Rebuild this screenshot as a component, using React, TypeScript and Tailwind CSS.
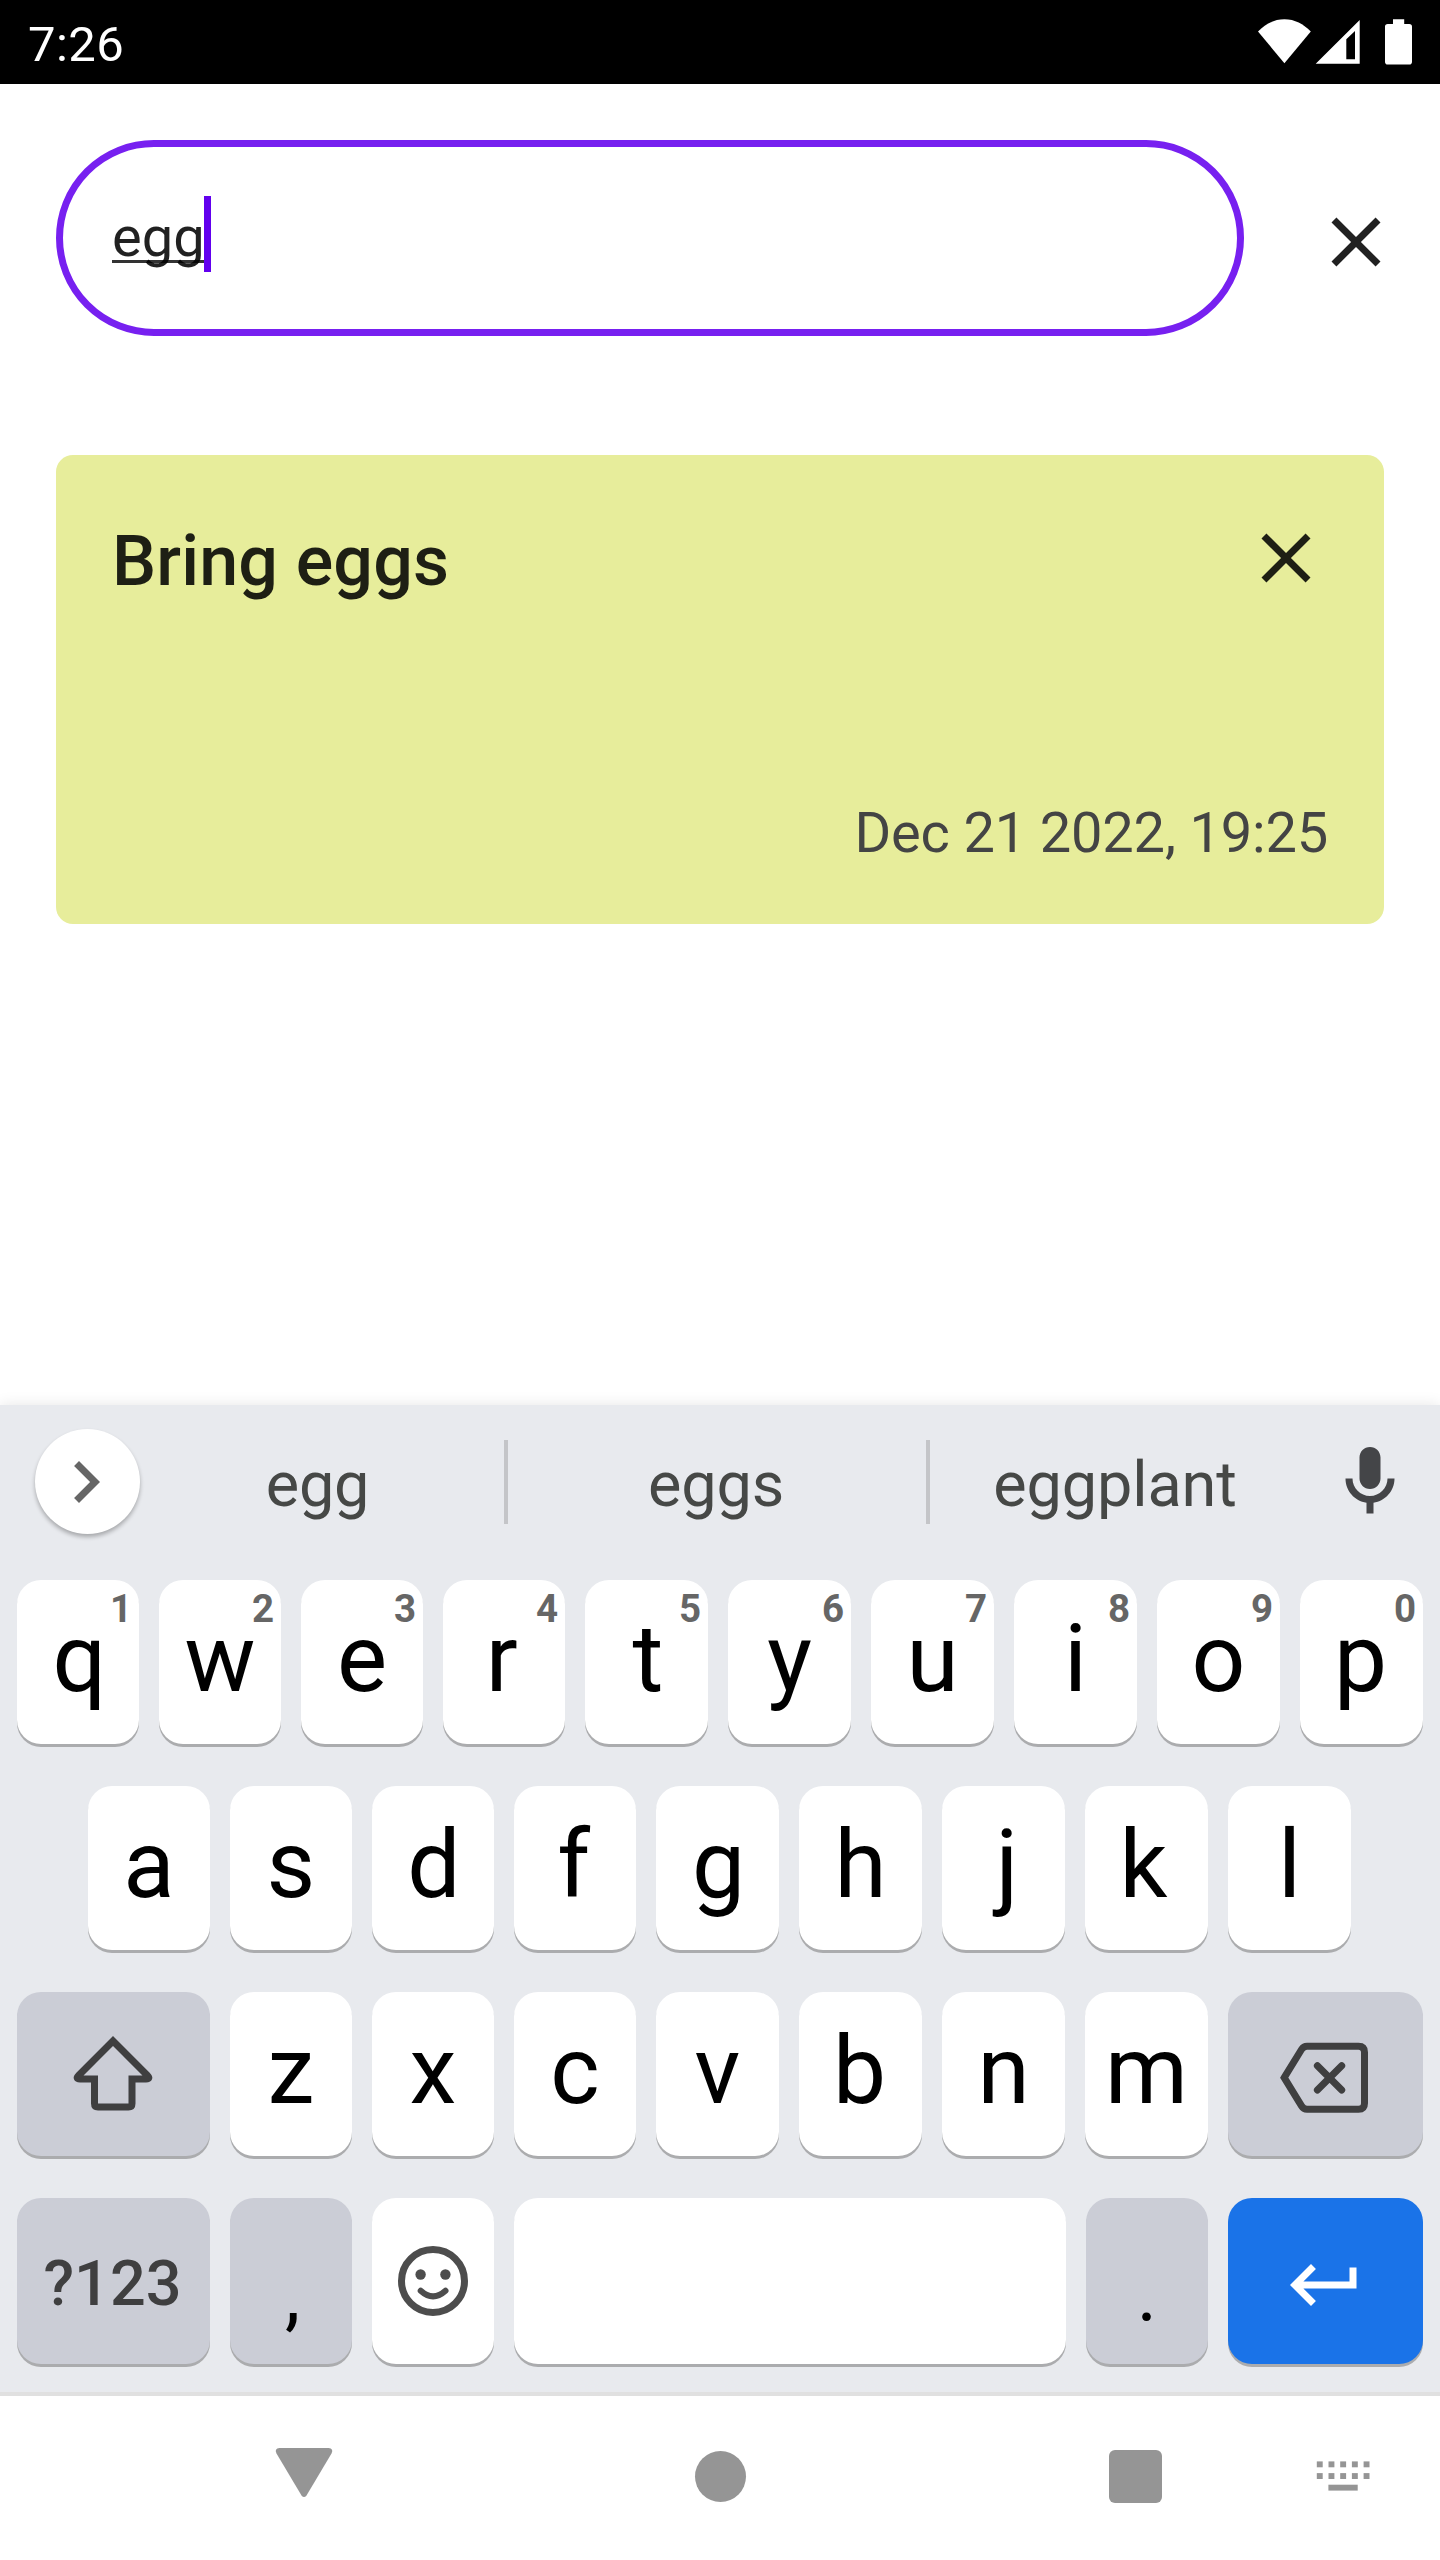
import React from "react";

type KeyDef = { label: string; w: number; hint?: string };

const row = (letters: string, firstWide: number, hints?: string): KeyDef[] =>
  letters.split("").map((label, i) => ({
    label,
    w: i < firstWide ? 122 : 123,
    hint: hints?.[i],
  }));

const ROW_ONE = row("qwertyuiop", 4, "1234567890");
const ROW_TWO = row("asdfghjkl", 4);
const ROW_THREE = row("zxcvbnm", 3);

// Side-bearing compensation, so each glyph is centred by its ink on the key cap.
const NUDGE: Record<string, number> = {
  q: 2.6,
  r: -4.4,
  t: 3,
  p: -2,
  d: 2,
  f: -2.6,
  g: 2,
  j: 7,
  k: -6,
  b: -2,
};

const KEY = "relative shrink-0 rounded-[24px] shadow-[0_3px_0_#abacae] flex justify-center";

function LetterKey({ label, w, hint }: KeyDef) {
  return (
    <button className={`${KEY} h-[164px] bg-white`} style={{ width: w }}>
      <span
        className="block h-[157px] text-[94.5px] leading-[157px] text-black"
        style={{ marginLeft: NUDGE[label] ?? 0 }}
      >
        {label}
      </span>
      {hint && (
        <span className="absolute right-[7px] top-0 text-[38.5px] font-bold leading-[57px] text-[#666666]">
          {hint}
        </span>
      )}
    </button>
  );
}

function CloseIcon({ className }: { className: string }) {
  return (
    <svg viewBox="0 0 24 24" className={`size-[84px] ${className}`} fill="currentColor">
      <path d="M19 6.41 17.59 5 12 10.59 6.41 5 5 6.41 10.59 12 5 17.59 6.41 19 12 13.41 17.59 19 19 17.59 13.41 12z" />
    </svg>
  );
}

function StatusBar() {
  return (
    <header className="flex h-[84px] shrink-0 justify-between bg-black pl-7 text-white">
      <span className="text-[49px] leading-[90px] tracking-[0.4px]">7:26</span>
      <svg viewBox="1250 0 190 84" className="h-[84px] w-[190px]" fill="currentColor">
        <path d="M1258 31.5C1265.5 24 1274 19.3 1284.4 19.3s18.900 4.700 26.400 12.200L1284.400 63.300z" />
        <path
          fillRule="evenodd"
          d="M1359.700 20V63.700H1315.700zM1355 31L1346.300 39.300V59.300H1355z"
        />
        <path d="M1393 19.300h11.200V24h5a2.800 2.800 0 0 1 2.800 2.800v35a2.800 2.800 0 0 1-2.800 2.800h-21.400a2.800 2.800 0 0 1-2.800-2.800v-35a2.800 2.800 0 0 1 2.800-2.800h5.200z" />
      </svg>
    </header>
  );
}

function SearchBar() {
  return (
    <div className="flex items-center pl-14 pt-14">
      <div className="flex h-[196px] w-[1188px] items-start rounded-full border-[7px] border-[#7720f0] pl-[49px]">
        <span className="relative text-[56px] leading-[180px] text-black/87">
          egg
          <span className="absolute left-0 top-[113px] h-[3px] w-[92px] bg-black/80" />
        </span>
        <span className="-ml-px mt-[49px] h-[76px] w-[7px] bg-[#6200ee]" />
      </div>
      <CloseIcon className="ml-[70px] mt-[8px] text-[#212121]" />
    </div>
  );
}

function NoteCard() {
  return (
    <article className="mx-14 mt-[119px] flex h-[469px] flex-col justify-between rounded-[17px] bg-[#e7ed9b] px-14">
      <div className="flex justify-between pt-14">
        <h1 className="text-[70px] font-medium leading-[100px] tracking-[0.15px] text-[#1e1f14]">
          Bring eggs
        </h1>
        <CloseIcon className="mt-[5px] text-[#1e1f14]" />
      </div>
      <time className="self-end pb-[49px] text-[56px] leading-[84px] tracking-[-0.18px] text-[#444444]">
        Dec 21 2022, 19:25
      </time>
    </article>
  );
}

function Suggestions() {
  return (
    <div className="flex h-[175px] text-center text-[63px] leading-[159px] tracking-[-0.15px] text-[#464846]">
      <button className="ml-[35px] mt-[24px] size-[105px] rounded-full bg-white shadow-[0_3px_4px_rgba(0,0,0,0.28)]">
        <svg viewBox="0 0 24 24" className="ml-[9px] size-[84px]" fill="#666666">
          <path d="M10 6 8.590 7.410 13.170 12l-4.580 4.590L10 18l6-6z" />
        </svg>
      </button>
      <span className="ml-[-10px] w-[374px] pl-px">egg</span>
      <span className="mt-[35px] h-[84px] w-[4px] bg-[#c4c5c8]" />
      <span className="w-[418px] pr-[2px]">eggs</span>
      <span className="mt-[35px] h-[84px] w-[4px] bg-[#c4c5c8]" />
      <span className="w-[370px]">eggplant</span>
      <svg viewBox="0 0 24 24" className="ml-[28px] mt-[35px] size-[84px]" fill="#444548">
        <path d="M12 14c1.660 0 3-1.340 3-3V5c0-1.660-1.340-3-3-3S9 3.340 9 5v6c0 1.660 1.340 3 3 3zm5-3c0 2.760-2.240 5-5 5s-5-2.240-5-5H5c0 3.530 2.610 6.430 6 6.920V21h2v-3.080c3.390-.49 6-3.390 6-6.920h-2z" />
      </svg>
    </div>
  );
}

function Keyboard() {
  return (
    <section className="flex h-[991px] shrink-0 flex-col border-b-[4px] border-[#e0e0e0] bg-[#e8eaee] shadow-[0_0_14px_rgba(0,0,0,0.1)]">
      <Suggestions />
      <div className="flex gap-5 pl-[17px]">
        {ROW_ONE.map((k) => (
          <LetterKey key={k.label} {...k} />
        ))}
      </div>
      <div className="mt-[42px] flex gap-5 pl-[88px]">
        {ROW_TWO.map((k) => (
          <LetterKey key={k.label} {...k} />
        ))}
      </div>
      <div className="mt-[42px] flex gap-5 pl-[17px]">
        <button className={`${KEY} h-[164px] w-[193px] bg-[#cbcdd6]`}>
          <svg
            viewBox="17 1992 193 164"
            className="h-[164px] w-[193px]"
            fill="none"
            stroke="#3f3f40"
            strokeWidth="7"
          >
            <path d="M113 2041L78.800 2075.200Q75 2079 80 2079H94.500V2103.500Q94.500 2107 98 2107H128.500Q132 2107 132 2103.500V2079H146Q151 2079 147.200 2075.200Z" />
          </svg>
        </button>
        {ROW_THREE.map((k) => (
          <LetterKey key={k.label} {...k} />
        ))}
        <button className={`${KEY} h-[164px] w-[195px] bg-[#cbcdd6]`}>
          <svg
            viewBox="1228 1992 195 164"
            className="h-[164px] w-[195px]"
            fill="none"
            stroke="#3f3f40"
            strokeWidth="7"
          >
            <path d="M1284.200 2077.700L1301.500 2049.500Q1303.500 2046.200 1307 2046.200H1358.500Q1364.500 2046.200 1364.500 2052.200V2103.200Q1364.500 2109.200 1358.500 2109.200H1307Q1303.500 2109.200 1301.500 2105.900Z" />
            <path strokeLinecap="round" d="M1317.400 2065.700l24.300 24.300M1341.700 2065.700l-24.300 24.300" />
          </svg>
        </button>
      </div>
      <div className="mt-[42px] flex gap-5 pl-[17px]">
        <button className={`${KEY} h-[166px] w-[193px] bg-[#cbcdd6]`}>
          <span className="mr-[2px] h-[166px] text-[63px] font-medium leading-[171px] text-[#3f3f40]">
            ?123
          </span>
        </button>
        <button className={`${KEY} h-[166px] w-[122px] bg-[#cbcdd6]`}>
          <span className="ml-[3px] h-[166px] text-[77px] leading-[195px] text-black">,</span>
        </button>
        <button className={`${KEY} h-[166px] w-[122px] bg-white`}>
          <svg viewBox="372 2198 122 166" className="h-[166px] w-[122px]" fill="none" stroke="#4d4d4d">
            <circle cx="433" cy="2281" r="31.500" strokeWidth="7" />
            <circle cx="420.600" cy="2274.500" r="5.200" fill="#4d4d4d" stroke="none" />
            <circle cx="445.400" cy="2274.500" r="5.200" fill="#4d4d4d" stroke="none" />
            <path d="M420.700 2290.800Q433 2302 445.500 2290.800" strokeWidth="6" strokeLinecap="round" />
          </svg>
        </button>
        <button className={`${KEY} h-[166px] w-[552px] bg-white`} />
        <button className={`${KEY} h-[166px] w-[122px] bg-[#cbcdd6]`}>
          <span className="h-[166px] text-[77px] leading-[195px] text-black">.</span>
        </button>
        <button className={`${KEY} h-[166px] w-[195px] bg-[#1a73e8]`}>
          <svg viewBox="0 0 24 24" className="mr-px mt-[45px] size-[84px]" fill="#ffffff">
            <path d="M19 7v4H5.830l3.580-3.590L8 6l-6 6 6 6 1.410-1.410L5.830 13H21V7z" />
          </svg>
        </button>
      </div>
    </section>
  );
}

function NavBar() {
  return (
    <nav className="flex h-[164px] shrink-0 bg-white text-[#959595]">
      <svg viewBox="0 0 62 56" className="ml-[273px] mt-[50px] h-[56px] w-[62px]" fill="currentColor">
        <path d="M6.500 2H55.500Q61 2.500 58.500 7.500L33.500 49.500Q31 52.500 28.500 49.500L3.500 7.500Q1 2.500 6.500 2z" />
      </svg>
      <span className="ml-[359.5px] mt-[54.5px] size-[51px] rounded-full bg-current" />
      <span className="ml-[363px] mt-[53.5px] size-[53px] rounded-[6px] bg-current" />
      <svg viewBox="1316 2460 55 32" className="ml-[154.5px] mt-[64px] h-[32px] w-[55px]" fill="currentColor">
        {[0, 1, 2, 3, 4].map((i) => (
          <g key={i}>
            <rect x={1316.8 + i * 11.7} y="2461.400" width="5.900" height="5.900" />
            <rect x={1316.8 + i * 11.7} y="2473.100" width="5.900" height="5.900" />
          </g>
        ))}
        <rect x="1328.400" y="2484.700" width="29.300" height="5.900" />
      </svg>
    </nav>
  );
}

export default function App() {
  return (
    <div className="flex h-[2560px] w-[1440px] flex-col overflow-hidden bg-white font-['Roboto',sans-serif]">
      <StatusBar />
      <main className="grow">
        <SearchBar />
        <NoteCard />
      </main>
      <Keyboard />
      <NavBar />
    </div>
  );
}
